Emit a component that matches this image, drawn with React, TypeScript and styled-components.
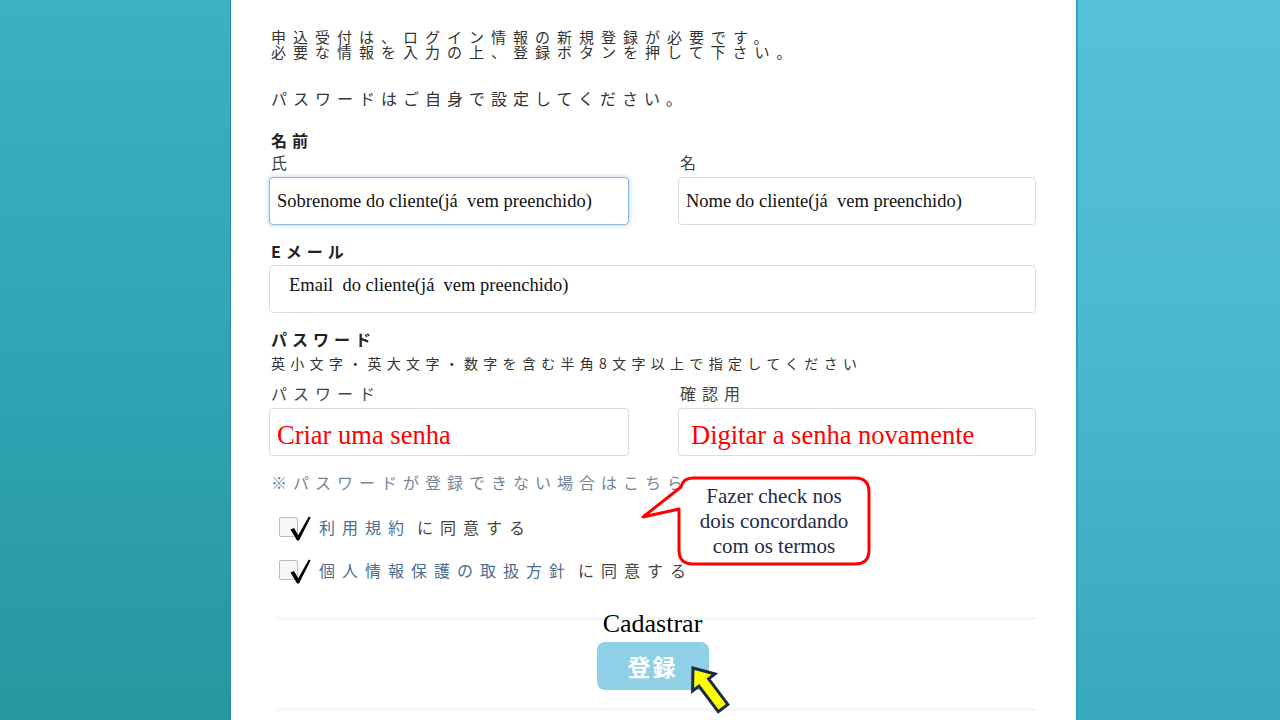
import styled, { createGlobalStyle } from "styled-components";

const GlobalStyle = createGlobalStyle`
  html, body {
    margin: 0;
    padding: 0;
    overflow: hidden;
    background: #ffffff;
  }
`;

const jp = `"Noto Sans CJK JP", "Noto Sans", sans-serif`;
const serif = `"Liberation Serif", "Times New Roman", serif`;

const Page = styled.div`
  display: flex;
  width: 1280px;
  height: 720px;
  overflow: hidden;
`;

const SidePanel = styled.div<{ side: "left" | "right" }>`
  flex: ${({ side }) => (side === "left" ? "0 0 230px" : "1 1 auto")};
  background: ${({ side }) =>
    side === "left"
      ? "linear-gradient(180deg, #3bb1c1 0%, #2fa3b2 55%, #27979f 100%)"
      : "linear-gradient(180deg, #56c1d9 0%, #48b7ce 55%, #38a8bc 100%)"};
  ${({ side }) =>
    side === "left"
      ? "border-right: 1px solid #2b909c;"
      : "border-left: 2px solid #2ea2bd;"}
`;

const Sheet = styled.div`
  position: relative;
  flex: 0 0 845px;
  box-sizing: border-box;
  background: #ffffff;
  padding: 29px 40px 0 38px;
  font-family: ${jp};
  color: #333;
`;

const Intro = styled.p`
  margin: 0;
  padding-left: 2px;
  font-size: 15px;
  line-height: 15px;
  letter-spacing: 7px;
  color: #333;
`;

const Notice = styled.p`
  margin: 29px 0 0;
  padding-left: 2px;
  font-size: 16px;
  line-height: 20px;
  letter-spacing: 6px;
`;

const SectionTitle = styled.div<{ gap: number }>`
  margin-top: ${({ gap }) => gap}px;
  padding-left: 2px;
  font-size: 16px;
  font-weight: 700;
  line-height: 20px;
  letter-spacing: 5px;
  color: #222;
`;

const Hint = styled.div`
  margin-top: 6px;
  padding-left: 2px;
  font-size: 14px;
  line-height: 16px;
  letter-spacing: 5.3px;
  color: #333;
`;

const FieldRow = styled.div<{ gap: number }>`
  display: grid;
  grid-template-columns: 360px 358px;
  column-gap: 49px;
  margin-top: ${({ gap }) => gap}px;
`;

const Field = styled.div`
  display: flex;
  flex-direction: column;
`;

const FieldLabel = styled.div`
  padding-left: 2px;
  font-size: 16px;
  line-height: 20px;
  letter-spacing: 6px;
  color: #444;
`;

const InputBox = styled.div<{
  focused?: boolean;
  indent: number;
  dy?: number;
  gap: number;
}>`
  display: flex;
  align-items: center;
  box-sizing: border-box;
  height: 48px;
  margin-top: ${({ gap }) => gap}px;
  padding-left: ${({ indent }) => indent}px;
  padding-top: ${({ dy }) => (dy && dy > 0 ? dy : 0)}px;
  padding-bottom: ${({ dy }) => (dy && dy < 0 ? -dy : 0)}px;
  border: 1px solid ${({ focused }) => (focused ? "#8fb8dc" : "#d9dcdf")};
  border-radius: 4px;
  box-shadow: ${({ focused }) =>
    focused ? "0 0 5px rgba(110, 165, 215, 0.55)" : "none"};
  background: #fff;
  font-family: ${serif};
  font-size: 18.5px;
  color: #111;
  white-space: pre;
`;

const RedHint = styled.span`
  font-family: ${serif};
  font-size: 26.5px;
  color: #ff0000;
`;

const HelpLink = styled.div`
  margin-top: 16px;
  padding-left: 2px;
  font-size: 16px;
  line-height: 20px;
  letter-spacing: 6px;
  color: #74879c;
`;

const AgreeRow = styled.div<{ gap: number }>`
  display: flex;
  align-items: center;
  height: 28px;
  margin-top: ${({ gap }) => gap}px;
  padding-left: 10px;
  font-size: 16px;
  letter-spacing: 7px;
  color: #444;
`;

const CheckBox = styled.span`
  position: relative;
  flex: 0 0 auto;
  box-sizing: border-box;
  width: 19px;
  height: 20px;
  margin-right: 21px;
  border: 1px solid #b9bcc0;
  border-radius: 2px;
  background: #f7f7f7;

  svg {
    position: absolute;
    left: 8px;
    top: -2px;
    overflow: visible;
  }
`;

const TermsLink = styled.span`
  color: #4b6e93;
  margin-right: 6px;
`;

const Footer = styled.div`
  position: relative;
  display: flex;
  flex-direction: column;
  align-items: center;
  margin-top: 33px;
`;

const Separator = styled.div`
  align-self: stretch;
  height: 3px;
  margin-left: 8px;
  background: #f4f6f9;
`;

const Caption = styled.div`
  position: absolute;
  left: 0;
  right: 0;
  top: -7px;
  text-align: center;
  font-family: ${serif};
  font-size: 26px;
  line-height: 28px;
  color: #000;
`;

const SubmitButton = styled.button`
  width: 112px;
  height: 48px;
  margin: 22px 0 18px;
  border: none;
  border-radius: 8px;
  background: #8fd0e7;
  color: #fff;
  font-family: ${jp};
  font-size: 23px;
  font-weight: 700;
  letter-spacing: 2px;
`;

const Bubble = styled.div`
  position: absolute;
  left: 408px;
  top: 476px;
  width: 234px;
  height: 92px;

  svg {
    position: absolute;
    inset: 0;
  }
`;

const BubbleText = styled.div`
  position: absolute;
  left: 40px;
  width: 190px;
  top: 8px;
  text-align: center;
  font-family: ${serif};
  font-size: 21px;
  line-height: 25px;
  color: #1f2b48;
`;

const Pointer = styled.svg`
  position: absolute;
  left: 447px;
  top: 658px;
  overflow: visible;
`;

const Check = () => (
  <svg width="24" height="26" viewBox="0 0 24 26">
    <path
      d="M2.5 13.5 L6 12 L10.2 19.2 L20.8 0.6 L22.6 1.6 L11 24.4 L9 24.4 Z"
      fill="#000"
    />
  </svg>
);

export default function App() {
  return (
    <>
      <GlobalStyle />
      <Page>
        <SidePanel side="left" />
        <Sheet>
          <Intro>
            申込受付は、ログイン情報の新規登録が必要です。
            <br />
            必要な情報を入力の上、登録ボタンを押して下さい。
          </Intro>
          <Notice>パスワードはご自身で設定してください。</Notice>

          <SectionTitle gap={22}>名前</SectionTitle>
          <FieldRow gap={2}>
            <Field>
              <FieldLabel>氏</FieldLabel>
              <InputBox gap={5} indent={7} focused>
                Sobrenome do cliente(já  vem preenchido)
              </InputBox>
            </Field>
            <Field>
              <FieldLabel>名</FieldLabel>
              <InputBox gap={5} indent={7}>
                Nome do cliente(já  vem preenchido)
              </InputBox>
            </Field>
          </FieldRow>

          <SectionTitle gap={16}>Eメール</SectionTitle>
          <InputBox gap={4} indent={19} dy={-8}>
            Email  do cliente(já  vem preenchido)
          </InputBox>

          <SectionTitle gap={16}>パスワード</SectionTitle>
          <Hint>英小文字・英大文字・数字を含む半角8文字以上で指定してください</Hint>
          <FieldRow gap={12}>
            <Field>
              <FieldLabel>パスワード</FieldLabel>
              <InputBox gap={5} indent={7} dy={6}>
                <RedHint>Criar uma senha</RedHint>
              </InputBox>
            </Field>
            <Field>
              <FieldLabel>確認用</FieldLabel>
              <InputBox gap={5} indent={12} dy={6}>
                <RedHint>Digitar a senha novamente</RedHint>
              </InputBox>
            </Field>
          </FieldRow>

          <HelpLink>※パスワードが登録できない場合はこちら</HelpLink>

          <AgreeRow gap={21}>
            <CheckBox>
              <Check />
            </CheckBox>
            <TermsLink>利用規約</TermsLink>に同意する
          </AgreeRow>
          <AgreeRow gap={15}>
            <CheckBox>
              <Check />
            </CheckBox>
            <TermsLink>個人情報保護の取扱方針</TermsLink>に同意する
          </AgreeRow>

          <Footer>
            <Separator />
            <Caption>Cadastrar</Caption>
            <SubmitButton>登録</SubmitButton>
            <Separator />
          </Footer>

          <Bubble>
            <svg width="234" height="92" viewBox="0 0 234 92">
              <path
                d="M54 2 H216 Q230 2 230 16 V74 Q230 88 216 88 H54 Q40 88 40 74 V33 L4 41 L42 11 Q44 2 54 2 Z"
                fill="#fff"
                stroke="#ff0000"
                strokeWidth="3"
                strokeLinejoin="round"
              />
            </svg>
            <BubbleText>
              Fazer check nos
              <br />
              dois concordando
              <br />
              com os termos
            </BubbleText>
          </Bubble>

          <Pointer width="60" height="60" viewBox="0 0 60 60">
            <polygon
              transform="translate(30 30) rotate(-37)"
              points="0,-25 14,-7 6,-7 6,25 -6,25 -6,-7 -14,-7"
              fill="#ffff00"
              stroke="#1f2a44"
              strokeWidth="3"
              strokeLinejoin="miter"
            />
          </Pointer>
        </Sheet>
        <SidePanel side="right" />
      </Page>
    </>
  );
}
